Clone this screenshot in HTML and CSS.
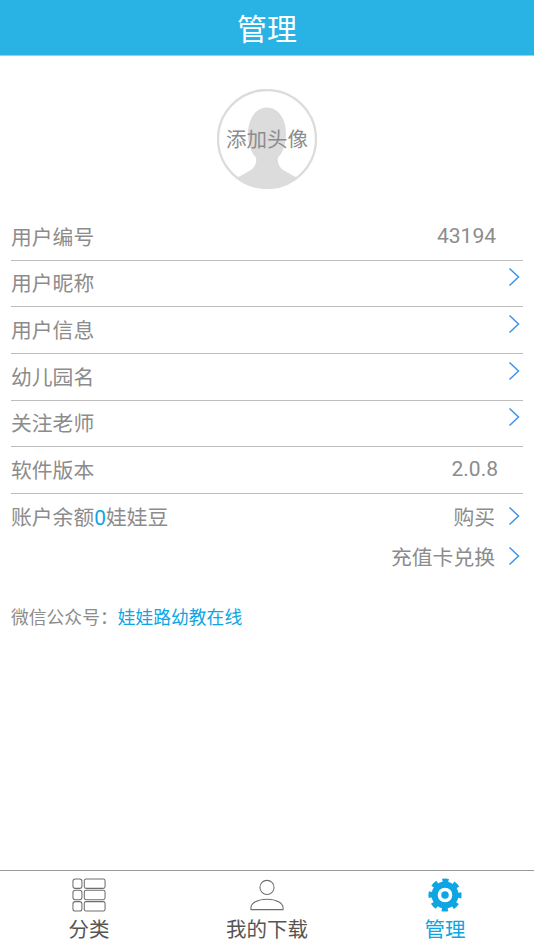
FILE: index.html
```html
<!DOCTYPE html>
<html lang="zh-CN">
<head>
  <meta charset="UTF-8" />
  <title>管理</title>
  <link rel="stylesheet" href="styles.css">
</head>
<body>

<div class="page">
  <div class="title-bar">管理</div>

  <div class="content">
    <div class="avatar">
      <svg class="avatar-img" viewBox="0 0 100 100">
        <defs>
          <clipPath id="avatar-clip"><circle cx="50" cy="50" r="49"/></clipPath>
        </defs>
        <circle cx="50" cy="50" r="49" fill="#fff"/>
        <path clip-path="url(#avatar-clip)" d="M50 18.500c-11 0-19 11-19 26 0 11 3 19 8 24 1 5-1 10-6 13-4 2.500-9 5-13 7v13h60V88.500c-4-2-9-4.500-13-7-5-3-7-8-6-13 5-5 8-13 8-24 0-15-8-26-19-26z" fill="#dcdcdc"/>
        <circle cx="50" cy="50" r="49" fill="none" stroke="#dcdcdc" stroke-width="2.400"/>
      </svg>
      <span class="avatar-text">添加头像</span>
    </div>

    <div class="list">
      <div class="row">
        <span>用户编号</span>
        <span class="value id-value">43194</span>
      </div>
      <div class="row">
        <span>用户昵称</span>
        <svg class="arrow raised" viewBox="0 0 12 20"><path d="M1.500 1.500 10.500 10l-9 8.500"/></svg>
      </div>
      <div class="row">
        <span>用户信息</span>
        <svg class="arrow raised" viewBox="0 0 12 20"><path d="M1.500 1.500 10.500 10l-9 8.500"/></svg>
      </div>
      <div class="row">
        <span>幼儿园名</span>
        <svg class="arrow raised" viewBox="0 0 12 20"><path d="M1.500 1.500 10.500 10l-9 8.500"/></svg>
      </div>
      <div class="row">
        <span>关注老师</span>
        <svg class="arrow raised" viewBox="0 0 12 20"><path d="M1.500 1.500 10.500 10l-9 8.500"/></svg>
      </div>
      <div class="row">
        <span>软件版本</span>
        <span class="value version-value">2.0.8</span>
      </div>
      <div class="row plain">
        <span>账户余额<b class="balance">0</b>娃娃豆</span>
        <span class="action">购买<svg class="arrow" viewBox="0 0 12 20"><path d="M1.500 1.500 10.500 10l-9 8.500"/></svg></span>
      </div>
      <div class="row plain recharge">
        <span class="action">充值卡兑换<svg class="arrow" viewBox="0 0 12 20"><path d="M1.500 1.500 10.500 10l-9 8.500"/></svg></span>
      </div>
    </div>

    <div class="wechat">微信公众号：<span class="wechat-name">娃娃路幼教在线</span></div>
  </div>

  <div class="tab-bar">
    <div class="tab">
      <svg class="tab-icon" viewBox="0 0 36 36" fill="none" stroke="#6e6e6e" stroke-width="1.100">
        <rect x="1" y="1" width="9.500" height="10" rx="2.500"/>
        <rect x="1" y="13" width="9.500" height="10" rx="2.500"/>
        <rect x="1" y="25" width="9.500" height="10" rx="2.500"/>
        <rect x="13" y="1" width="22" height="10" rx="2"/>
        <rect x="13" y="13" width="22" height="10" rx="2"/>
        <rect x="13" y="25" width="22" height="10" rx="2"/>
      </svg>
      <span>分类</span>
    </div>
    <div class="tab">
      <svg class="tab-icon" viewBox="0 0 36 36" fill="none" stroke="#6e6e6e" stroke-width="1.100">
        <circle cx="18" cy="10" r="7.500"/>
        <path d="M1 33.500v-2c0-5 7-9 17-9s17 4 17 9v2z"/>
      </svg>
      <span>我的下载</span>
    </div>
    <div class="tab">
      <svg class="tab-icon" viewBox="0 0 36 36" fill="none" stroke="#0ea5e3">
        <circle cx="18" cy="18" r="11" stroke-width="6.500"/>
        <circle cx="18" cy="18" r="15.250" stroke-width="4.500" stroke-dasharray="6.500 5.480" stroke-dashoffset="3.250"/>
        <circle cx="18" cy="18" r="4" fill="#0ea5e3" stroke="none"/>
      </svg>
      <span class="tab-active">管理</span>
    </div>
  </div>
</div>

</body>
</html>
```

FILE: styles.css
```css
:root {
  --main-color: #29b2e4;
  --link-color: #0ea5e3;
  --text-color: #8c8c8c;
  --line-color: #bdbdbd;
  --arrow-color: #3c92f0;
}

html,
body {
  margin: 0;
  padding: 0;
  background: #fff;
}

body {
  font-family: "Noto Sans CJK SC", "Noto Sans", sans-serif;
  color: var(--text-color);
}

.page {
  width: 534px;
  height: 950px;
  display: flex;
  flex-direction: column;
  overflow: hidden;
}

.title-bar {
  height: 56px;
  line-height: 54px;
  flex-shrink: 0;
  background: var(--main-color);
  color: #fff;
  font-size: 30px;
  text-align: center;
  border-bottom: 1px solid #8fd3ee;
  box-sizing: border-box;
}

.content {
  flex: 1;
  padding: 33px 11px 0;
}

.avatar {
  position: relative;
  width: 100px;
  height: 100px;
  margin: 0 auto 25px;
}

.avatar-img {
  display: block;
  width: 100px;
  height: 100px;
}

.avatar-text {
  position: absolute;
  left: 0;
  right: 0;
  top: 35px;
  line-height: 28px;
  text-align: center;
  font-size: 20.500px;
  white-space: nowrap;
}

.row {
  height: 46.670px;
  box-sizing: border-box;
  display: flex;
  align-items: center;
  justify-content: space-between;
  font-size: 20.800px;
  padding-bottom: 2px;
  border-bottom: 1px solid var(--line-color);
}

.row.plain {
  height: 46px;
  border-bottom: none;
}

.row.recharge {
  height: 34px;
  justify-content: flex-end;
}

.value {
  font-family: Roboto, sans-serif;
  font-size: 21px;
}

.id-value {
  margin-right: 27px;
}

.version-value {
  margin-right: 25px;
}

.balance {
  font-family: Roboto, sans-serif;
  font-weight: 400;
  color: var(--link-color);
}

.action {
  display: flex;
  align-items: center;
  margin-right: 3px;
}

.arrow {
  width: 12px;
  height: 20px;
  margin-right: 3px;
  fill: none;
  stroke: var(--arrow-color);
  stroke-width: 1.500;
}

.action .arrow {
  margin-left: 13px;
  margin-right: 0;
}

.raised {
  position: relative;
  top: -5px;
}

.wechat {
  margin-top: 29px;
  font-size: 17.800px;
  line-height: 26px;
}

.wechat-name {
  color: var(--link-color);
}

.tab-bar {
  height: 80px;
  flex-shrink: 0;
  box-sizing: border-box;
  border-top: 1px solid #9a9a9a;
  display: flex;
  padding-top: 7px;
}

.tab {
  flex: 1;
  display: flex;
  flex-direction: column;
  align-items: center;
  font-size: 20.500px;
  line-height: 30px;
  color: #555;
}

.tab-active {
  color: var(--link-color);
}

.tab-icon {
  display: block;
  width: 34px;
  height: 34px;
  margin-bottom: 1px;
}
```
